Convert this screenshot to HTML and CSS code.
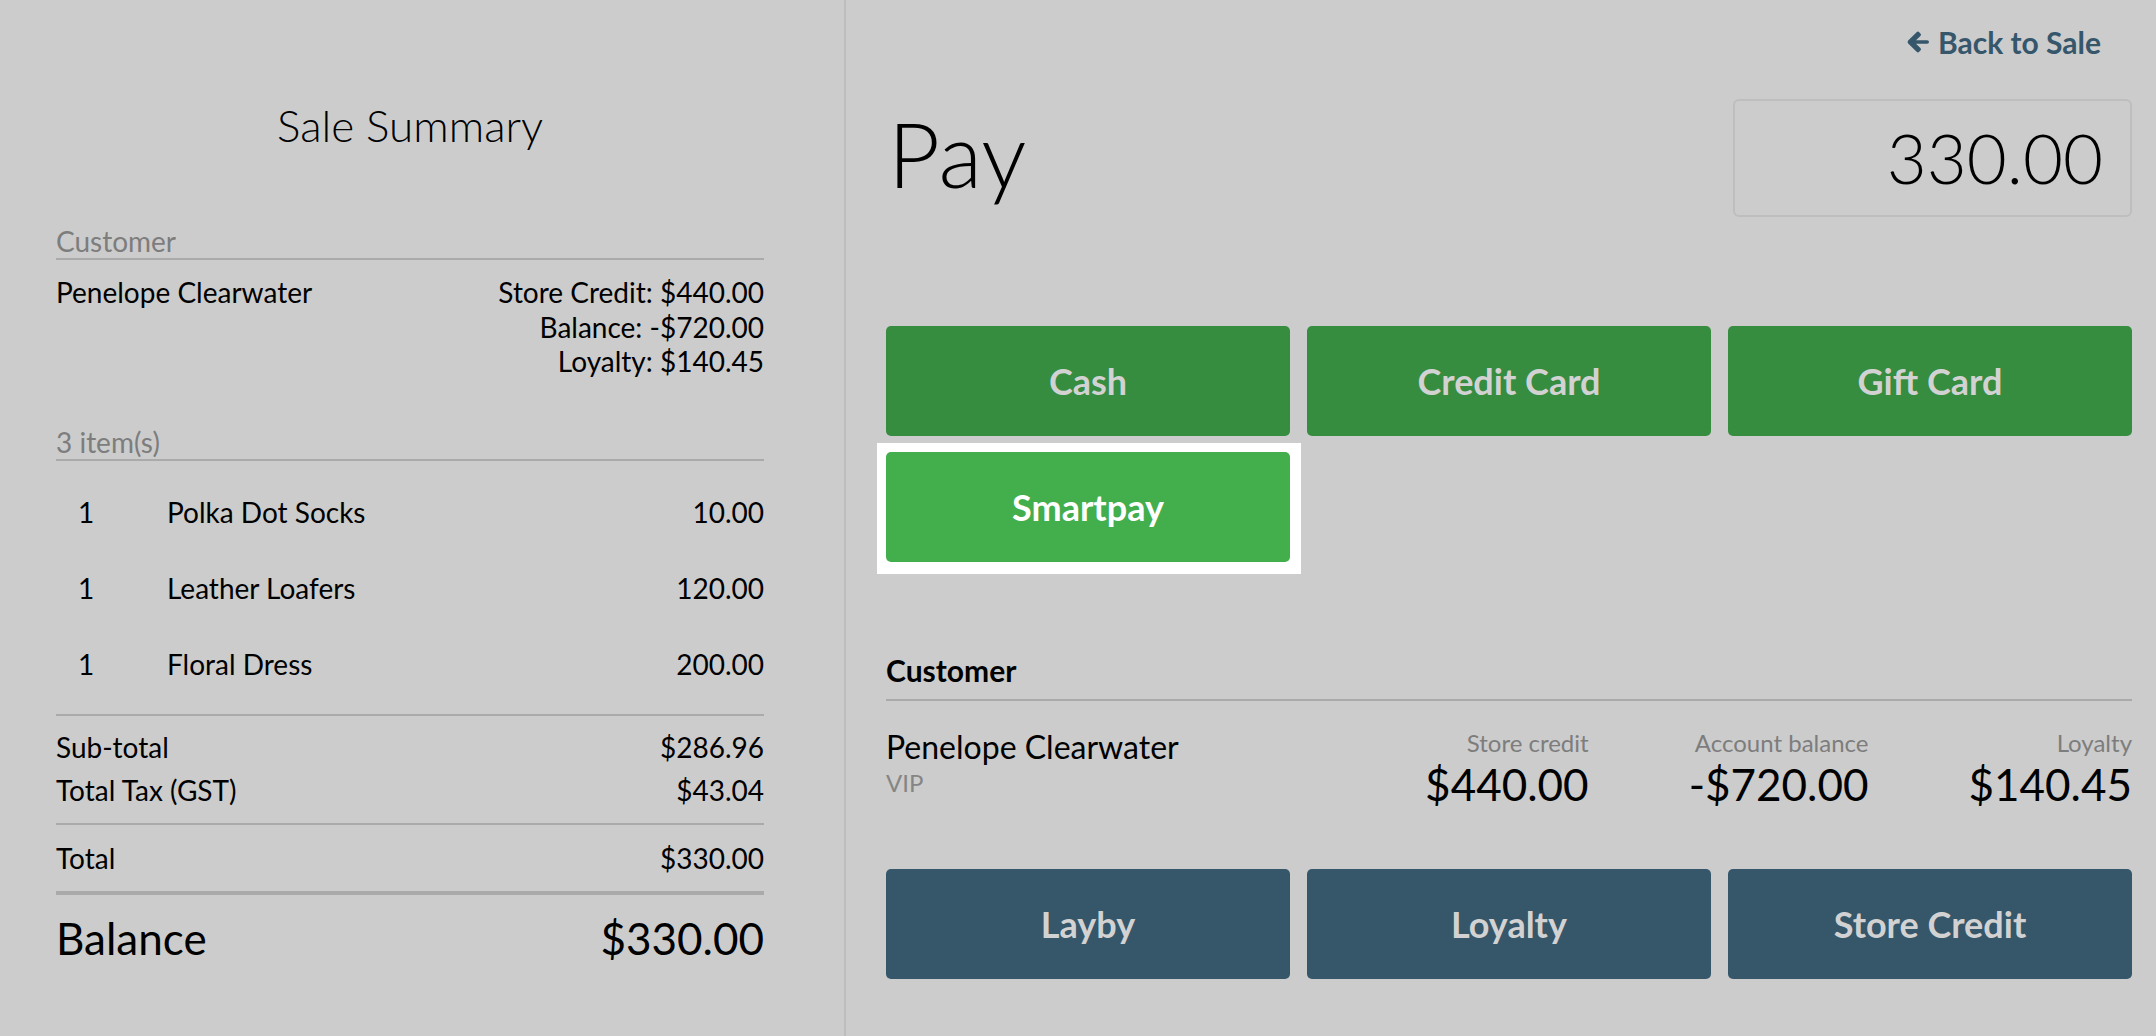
FILE: index.html
```html
<!DOCTYPE html>
<html>
<head>
<meta charset="utf-8">
<title>Pay</title>
<link rel="stylesheet" href="styles.css">
</head>
<body>
<div class="app">
  <aside class="summary">
    <h2 class="summary-title">Sale Summary</h2>

    <div class="section-label">Customer</div>
    <div class="cust-row">
      <div class="cust-name">Penelope Clearwater</div>
      <div class="cust-stats">
        <div>Store Credit: $440.00</div>
        <div>Balance: -$720.00</div>
        <div>Loyalty: $140.45</div>
      </div>
    </div>

    <div class="section-label items-label">3 item(s)</div>
    <ul class="items">
      <li class="item"><span class="qty">1</span><span class="name">Polka Dot Socks</span><span class="price">10.00</span></li>
      <li class="item"><span class="qty">1</span><span class="name">Leather Loafers</span><span class="price">120.00</span></li>
      <li class="item"><span class="qty">1</span><span class="name">Floral Dress</span><span class="price">200.00</span></li>
    </ul>

    <div class="totals">
      <div class="line"><span>Sub-total</span><span>$286.96</span></div>
      <div class="line"><span>Total Tax (GST)</span><span>$43.04</span></div>
    </div>
    <div class="totals grand">
      <div class="line"><span>Total</span><span>$330.00</span></div>
    </div>
    <div class="balance"><span>Balance</span><span>$330.00</span></div>
  </aside>

  <main class="pay">
    <div class="back-row">
      <a class="back" href="#">
        <svg class="back-icon" viewBox="0 0 24 26" aria-hidden="true"><path d="M10.6 3.2 L2.2 11.6 a2 2 0 0 0 0 2.8 L10.6 22.8 a1.8 1.8 0 0 0 2.6 0 L14.4 21.6 a1.8 1.8 0 0 0 0 -2.6 L10 14.8 H21.2 a1.8 1.8 0 0 0 1.8 -1.8 V13 a1.8 1.8 0 0 0 -1.8 -1.8 H10 L14.4 7 a1.8 1.8 0 0 0 0 -2.6 L13.2 3.2 a1.8 1.8 0 0 0 -2.6 0 Z"/></svg>
        <span>Back to Sale</span>
      </a>
    </div>

    <div class="pay-head">
      <h1 class="pay-title">Pay</h1>
      <div class="amount">330.00</div>
    </div>

    <div class="methods">
      <button class="btn btn-green">Cash</button>
      <button class="btn btn-green">Credit Card</button>
      <button class="btn btn-green">Gift Card</button>
      <div class="highlight"><button class="btn btn-bright">Smartpay</button></div>
    </div>

    <section class="customer">
      <h3 class="customer-title">Customer</h3>
      <div class="customer-detail">
        <div class="who">
          <div class="who-name">Penelope Clearwater</div>
          <div class="who-group">VIP</div>
        </div>
        <div class="stats">
          <div class="stat"><div class="stat-label">Store credit</div><div class="stat-value">$440.00</div></div>
          <div class="stat"><div class="stat-label">Account balance</div><div class="stat-value">-$720.00</div></div>
          <div class="stat"><div class="stat-label">Loyalty</div><div class="stat-value">$140.45</div></div>
        </div>
      </div>
    </section>

    <div class="methods account-methods">
      <button class="btn btn-blue">Layby</button>
      <button class="btn btn-blue">Loyalty</button>
      <button class="btn btn-blue">Store Credit</button>
    </div>
  </main>
</div>
</body>
</html>
```

FILE: styles.css
```css
* { box-sizing: border-box; }

html, body {
  margin: 0;
  padding: 0;
  background: #cccccc;
}

body {
  font-family: Lato, "Open Sans", "Liberation Sans", sans-serif;
  color: #000;
  font-size: 28px;
}

.app {
  display: flex;
  min-height: 100vh;
}

/* ---------- left summary ---------- */
.summary {
  width: 846px;
  flex: none;
  border-right: 2px solid #bdbdbd;
  padding: 99px 80px 0 56px;
}

.summary-title {
  margin: 0;
  font-size: 44px;
  font-weight: 300;
  line-height: 53px;
  text-align: center;
}

.section-label {
  margin-top: 72px;
  color: #7d7d7d;
  font-size: 28px;
  line-height: 34px;
  border-bottom: 2px solid #aaaaaa;
}

.cust-row {
  display: flex;
  justify-content: space-between;
  margin-top: 15px;
  line-height: 34.5px;
}

.cust-stats { text-align: right; }

.items-label { margin-top: 46px; }

.items {
  list-style: none;
  margin: 0;
  padding: 13px 0 12px;
  border-bottom: 2px solid #aaaaaa;
}

.item {
  display: flex;
  padding: 21px 0;
  line-height: 34px;
}

.qty {
  width: 111px;
  padding-left: 22px;
  flex: none;
}

.name { flex: 1; }

.price { text-align: right; }

.totals {
  padding: 10px 0 11px;
  border-bottom: 2px solid #aaaaaa;
}

.totals.grand {
  padding: 12px 0 11px;
  border-bottom: 4px solid #aaaaaa;
}

.line {
  display: flex;
  justify-content: space-between;
  line-height: 43px;
}

.balance {
  display: flex;
  justify-content: space-between;
  padding-top: 17px;
  font-size: 44px;
  line-height: 53px;
}

/* ---------- right pay panel ---------- */
.pay {
  flex: 1;
  padding: 25px 24px 0 40px;
}

.back-row {
  display: flex;
  justify-content: flex-end;
  line-height: 34px;
  padding-right: 31px;
}

.back {
  display: flex;
  align-items: center;
  gap: 8px;
  color: #35566b;
  font-weight: 700;
  font-size: 30px;
  text-decoration: none;
}

.back-icon {
  width: 24px;
  height: 26px;
  fill: #35566b;
}

.pay-head {
  display: flex;
  justify-content: space-between;
  align-items: flex-start;
  margin-top: 40px;
}

.pay-title {
  margin: 0 0 0 2px;
  font-size: 90px;
  font-weight: 300;
  line-height: 108px;
}

.amount {
  width: 399px;
  height: 118px;
  border: 2px solid #bebebe;
  border-radius: 6px;
  padding-right: 27px;
  text-align: right;
  font-size: 69px;
  font-weight: 300;
  line-height: 114px;
}

.methods {
  display: grid;
  grid-template-columns: repeat(3, 1fr);
  column-gap: 17px;
  row-gap: 16px;
  margin-top: 109px;
}

.btn {
  display: block;
  width: 100%;
  height: 110px;
  border: 0;
  border-radius: 5px;
  font-family: inherit;
  font-size: 36px;
  font-weight: 700;
  color: #d2d2d2;
  padding: 0;
  cursor: pointer;
}

.btn-green { background: #368c3f; }
.btn-blue { background: #36566a; }
.btn-bright { background: #42ae4c; color: #ffffff; }

.highlight {
  background: #ffffff;
  margin: -9px -11px -12px -9px;
  padding: 9px 11px 12px 9px;
}

.customer { margin-top: 90px; }

.customer-title {
  margin: 0;
  font-size: 30px;
  font-weight: 700;
  line-height: 37px;
  padding-bottom: 10px;
  border-bottom: 2px solid #aaaaaa;
}

.customer-detail {
  display: flex;
  justify-content: space-between;
  align-items: flex-start;
  margin-top: 27px;
}

.who-name {
  font-size: 32px;
  line-height: 38px;
}

.who-group {
  margin-top: 2px;
  color: #858585;
  font-size: 24px;
  line-height: 30px;
}

.stats {
  display: flex;
  gap: 100px;
}

.stat { text-align: right; }

.stat-label {
  color: #7d7d7d;
  font-size: 24px;
  line-height: 30px;
}

.stat-value {
  margin-top: 1px;
  font-size: 44px;
  line-height: 50px;
}

.account-methods { margin-top: 60px; }
```
